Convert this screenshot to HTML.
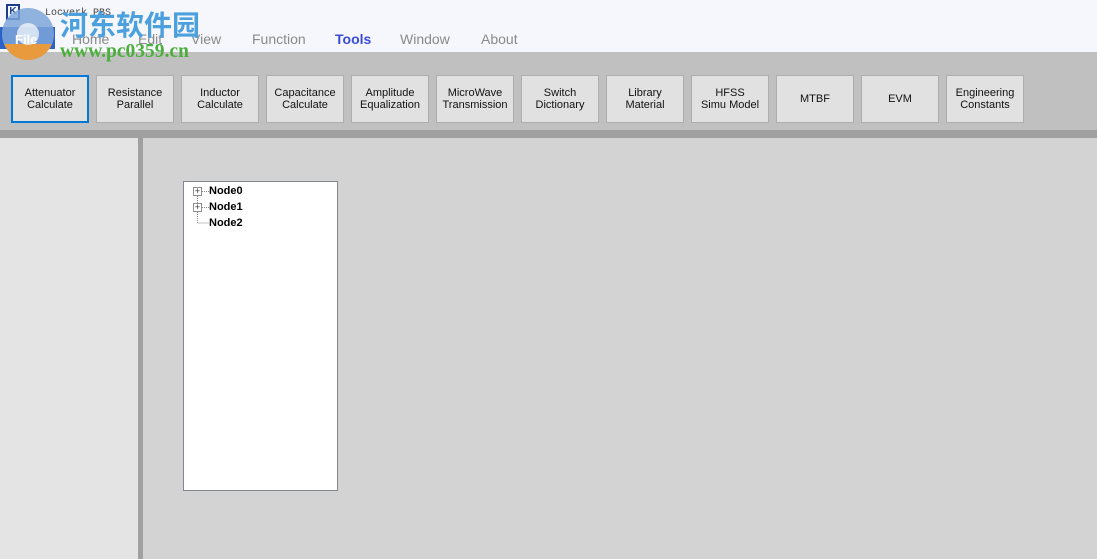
<!DOCTYPE html>
<html><head><meta charset="utf-8"><style>
*{margin:0;padding:0;box-sizing:border-box}
body{width:1097px;height:559px;overflow:hidden;position:relative;background:#d3d3d3;font-family:"Liberation Sans",sans-serif}
.top{position:absolute;left:0;top:0;width:1097px;height:52px;background:#f5f7fc}
.tb{position:absolute;left:0;top:52px;width:1097px;height:78px;background:#c0c0c0}
.strip{position:absolute;left:0;top:130px;width:1097px;height:8px;background:#a0a0a0}
.left{position:absolute;left:0;top:138px;width:138px;height:421px;background:#e4e4e4}
.div{position:absolute;left:138px;top:138px;width:5px;height:421px;background:#a0a0a0}
.menu{position:absolute;top:31px;font-size:14px;color:#8a8a8a}
.btn{position:absolute;top:75px;width:78px;height:48px;background:#e1e1e1;border:1px solid #adadad;font-size:11px;color:#111;display:flex;align-items:center;justify-content:center;text-align:center;line-height:12px}
.btn.sel{border:2px solid #0078d7}
.tree{position:absolute;left:183px;top:181px;width:155px;height:310px;background:#fff;border:1px solid #828790;font-size:11px;font-weight:bold}
.n{position:absolute;left:25px}
.pm{position:absolute;left:9px;width:9px;height:9px;border:1px solid #919191;background:#fff;font-size:9px;line-height:7px;text-align:center;color:#333;font-weight:normal}
</style></head><body>
<div class="top"></div>
<div class="tb"></div>
<div class="strip"></div>
<div class="left"></div>
<div class="div"></div>
<div style="position:absolute;left:6px;top:4px;width:14px;height:16px;border:2px solid #1a3e8c;font-size:10px;font-weight:bold;color:#1a3e8c;line-height:12px;text-align:center">K</div>
<div style="position:absolute;left:45px;top:8px;font-family:'Liberation Mono',monospace;font-size:10px;color:#444">Locverk PBS</div>
<div style="position:absolute;left:0;top:27px;width:55px;height:22px;background:#2b62c8"></div>
<svg style="position:absolute;left:0;top:6px" width="60" height="58"><circle cx="28" cy="28" r="26" fill="#7ea6d8" opacity=".85"/><path d="M4 38 A26 26 0 0 0 52 38 Z" fill="#e89a3c"/><circle cx="28" cy="28" r="11" fill="#fff" opacity=".7"/></svg>
<div style="position:absolute;left:15px;top:32px;font-size:13px;font-weight:bold;color:#fff">File</div>
<div class="menu" style="left:72px">Home</div>
<div class="menu" style="left:138px">Edit</div>
<div class="menu" style="left:191px">View</div>
<div class="menu" style="left:252px">Function</div>
<div class="menu" style="left:335px;color:#3a4bd6;font-weight:bold">Tools</div>
<div class="menu" style="left:400px">Window</div>
<div class="menu" style="left:481px">About</div>
<div style="position:absolute;left:60px;top:8px;font-family:'Noto Sans CJK SC',sans-serif;font-size:28px;font-weight:bold;color:#4da0de;line-height:32px">河东软件园</div>
<div style="position:absolute;left:60px;top:41px;font-family:'Liberation Serif',serif;font-size:19.5px;font-weight:bold;color:#4caf3c">www.pc0359.cn</div>
<div class="btn sel" style="left:11px">Attenuator<br>Calculate</div>
<div class="btn" style="left:96px">Resistance<br>Parallel</div>
<div class="btn" style="left:181px">Inductor<br>Calculate</div>
<div class="btn" style="left:266px">Capacitance<br>Calculate</div>
<div class="btn" style="left:351px">Amplitude<br>Equalization</div>
<div class="btn" style="left:436px">MicroWave<br>Transmission</div>
<div class="btn" style="left:521px">Switch<br>Dictionary</div>
<div class="btn" style="left:606px">Library<br>Material</div>
<div class="btn" style="left:691px">HFSS<br>Simu Model</div>
<div class="btn" style="left:776px">MTBF</div>
<div class="btn" style="left:861px">EVM</div>
<div class="btn" style="left:946px">Engineering<br>Constants</div>
<div class="tree">
<svg style="position:absolute;left:0;top:0" width="30" height="50"><path d="M13.5 14V41H25M18 9.5H25M18 25.5H25" stroke="#888" stroke-dasharray="1 1" fill="none"/></svg>
<div class="pm" style="top:5px">+</div><div class="n" style="top:3px">Node0</div>
<div class="pm" style="top:21px">+</div><div class="n" style="top:19px">Node1</div>
<div class="n" style="top:35px">Node2</div>
</div>
</body></html>
